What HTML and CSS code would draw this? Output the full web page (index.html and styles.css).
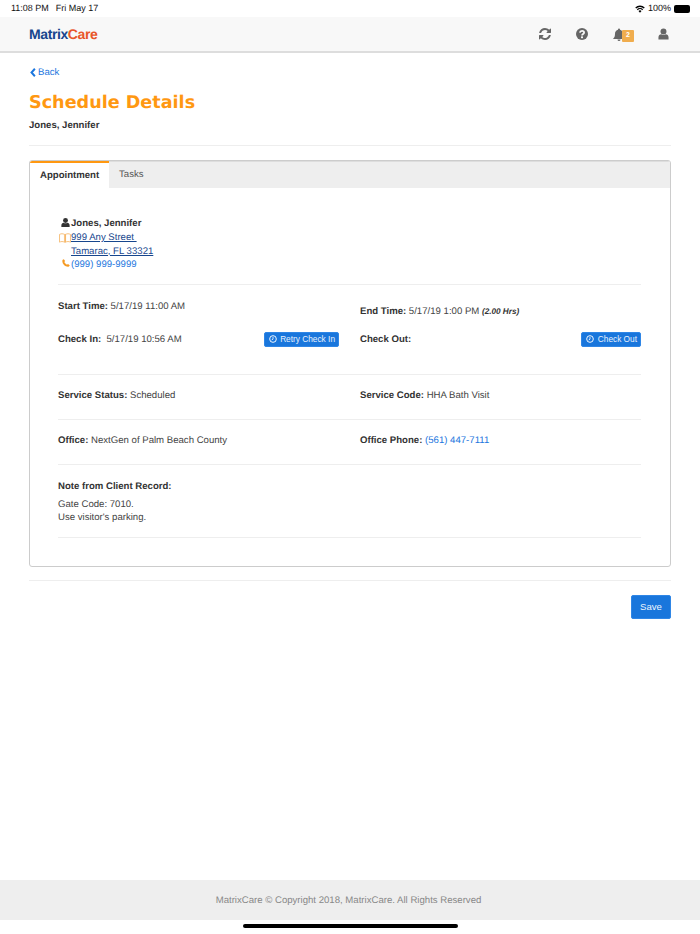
FILE: index.html
```html
<!DOCTYPE html>
<html lang="en">
<head>
<meta charset="utf-8">
<title>Schedule Details</title>
<link rel="stylesheet" href="styles.css">
</head>
<body>
<div class="page">
  <div class="status">
    <div class="status-time"><span>11:08 PM</span><span>Fri May 17</span></div>
    <div class="status-right">
      <svg class="wifi" viewBox="0 0 16 12" width="10" height="8"><path fill="#000" d="M8 12 5.6 9.3a3.4 3.4 0 0 1 4.8 0zM4.4 8 3 6.5a7 7 0 0 1 10 0L11.600 8a5 5 0 0 0-7.200 0zM1.900 5.300.4 3.700a10.800 10.800 0 0 1 15.200 0l-1.500 1.600a8.600 8.600 0 0 0-12.200 0z"/></svg>
      <span>100%</span>
      <span class="battery"></span>
    </div>
  </div>
  <header class="nav">
    <div class="logo"><span class="logo-a">Matrix</span><span class="logo-b">Care</span></div>
    <div class="nav-icons">
      <svg viewBox="0 0 1536 1536" width="12" height="12"><path fill="#666" d="M1511 928q0 5-1 7-64 268-268 434.500T764 1536q-146 0-282.500-55T238 1324l-129 129q-19 19-45 19t-45-19-19-45V960q0-26 19-45t45-19h448q26 0 45 19t19 45-19 45l-137 137q71 66 161 102t187 36q134 0 250-65t186-179q11-17 53-117 8-23 30-23h192q13 0 22.500 9.500T1511 928zm25-800v448q0 26-19 45t-45 19h-448q-26 0-45-19t-19-45 19-45l138-138Q969 256 768 256q-134 0-250 65T332 500q-11 17-53 117-8 23-30 23H50q-13 0-22.500-9.500T18 608v-7q65-268 270-434.500T768 0q146 0 284 55.500T1297 212l130-129q19-19 45-19t45 19 19 45z"/></svg>
      <svg viewBox="0 0 24 24" width="12" height="12"><circle cx="12" cy="12" r="12" fill="#666"/><path fill="none" stroke="#f8f8f8" stroke-width="3.600" d="M7.800 9.300c.3-2.300 2-3.500 4.300-3.500 2.400 0 4.100 1.400 4.100 3.400 0 3-3.900 2.900-4.100 5.800"/><rect x="10" y="16.800" width="4" height="3.600" fill="#f8f8f8"/></svg>
      <span class="bell">
        <svg viewBox="0 0 24 24" width="12" height="13"><path fill="#666" d="M12 0a2 2 0 0 1 2 2v.6c3.700.9 6 3.800 6 7.900 0 6 1.500 7.500 3.500 9.500v1H.5v-1c2-2 3.500-3.500 3.500-9.500 0-4.100 2.300-7 6-7.900V2a2 2 0 0 1 2-2zM9 22h6a3 3 0 0 1-6 0z"/></svg>
        <span class="badge">2</span>
      </span>
      <svg viewBox="0 0 24 24" width="11" height="12"><circle cx="12" cy="6.500" r="6.500" fill="#666"/><path fill="#666" d="M1 24v-5c0-4 3-6.500 6-6.500 1.500 1 3 1.500 5 1.500s3.500-.5 5-1.500c3 0 6 2.500 6 6.500v5z"/></svg>
    </div>
  </header>
  <main class="main">
    <a class="back"><svg viewBox="0 0 8 12" width="6" height="9"><path fill="none" stroke="#1b76de" stroke-width="2.600" d="M6.500 1 2 6l4.500 5"/></svg>Back</a>
    <h1>Schedule Details</h1>
    <div class="subtitle">Jones, Jennifer</div>
    <hr class="rule">
    <section class="card">
      <div class="tabs">
        <div class="tab active">Appointment</div>
        <div class="tab">Tasks</div>
      </div>
      <div class="card-body">
        <div class="contact">
          <div class="contact-line"><svg class="ci up" viewBox="0 0 24 24" width="8" height="9"><circle cx="12" cy="6.500" r="6.500" fill="#333"/><path fill="#333" d="M1 24v-5c0-4 3-6.500 6-6.500 1.500 1 3 1.500 5 1.500s3.500-.5 5-1.500c3 0 6 2.500 6 6.500v5z"/></svg><b>Jones, Jennifer</b></div>
          <div class="contact-line"><svg class="ci map" viewBox="0 0 22 18" width="12" height="10" preserveAspectRatio="none"><path fill="none" stroke="#f5b565" stroke-width="1.500" d="M1 2.500c3-1.500 6-1.500 9 0v14c-3-1.500-6-1.500-9 0zM10 2.500h2v14h-2M12 2.500c3-1.500 6-1.500 9 0v14c-3-1.500-6-1.500-9 0z"/></svg><a class="addr">999 Any Street&nbsp;</a></div>
          <div class="contact-line"><span class="ci"></span><a class="addr">Tamarac, FL 33321</a></div>
          <div class="contact-line"><svg class="ci up2" viewBox="0 0 12 12" width="8" height="8"><path fill="#f59a23" d="M2.800.5 4.600 3 3.500 4.600c.7 1.600 2.200 3.100 3.900 3.900L9 7.400l2.500 1.800c-.3 1.400-1.300 2.300-2.500 2.300C4.500 11.500.5 7.500.5 3 .5 1.800 1.400.8 2.800.500z"/></svg><a class="link">(999) 999-9999</a></div>
        </div>
        <div class="row times">
          <div class="col start"><b>Start Time:</b> 5/17/19 11:00 AM</div>
          <div class="col end"><b>End Time:</b> 5/17/19 1:00 PM <i class="hrs">(2.00 Hrs)</i></div>
        </div>
        <div class="row checks">
          <div class="col between"><span><b>Check In:</b>&nbsp; 5/17/19 10:56 AM</span><button class="mini"><svg viewBox="0 0 12 12" width="8" height="8"><circle cx="6" cy="6" r="5" fill="none" stroke="#fff" stroke-width="1.400"/><path fill="none" stroke="#fff" stroke-width="1.200" d="M6 3v3.300L4 7.500"/></svg>Retry Check In</button></div>
          <div class="col between"><b>Check Out:</b><button class="mini"><svg viewBox="0 0 12 12" width="8" height="8"><circle cx="6" cy="6" r="5" fill="none" stroke="#fff" stroke-width="1.400"/><path fill="none" stroke="#fff" stroke-width="1.200" d="M6 3v3.300L4 7.500"/></svg>Check Out</button></div>
        </div>
        <div class="row info">
          <div class="col"><b>Service Status:</b> Scheduled</div>
          <div class="col"><b>Service Code:</b> HHA Bath Visit</div>
        </div>
        <div class="row info">
          <div class="col"><b>Office:</b> NextGen of Palm Beach County</div>
          <div class="col"><b>Office Phone:</b> <a class="link">(561) 447-7111</a></div>
        </div>
        <div class="note">
          <b>Note from Client Record:</b>
          <p>Gate Code: 7010.<br>Use visitor's parking.</p>
        </div>
      </div>
    </section>
    <hr class="rule rule-low">
    <div class="actions"><button class="save">Save</button></div>
  </main>
  <footer class="footer">MatrixCare © Copyright 2018, MatrixCare. All Rights Reserved</footer>
  <div class="home-wrap"><div class="home"></div></div>
</div>
</body>
</html>
```
FILE: styles.css
```css
* { box-sizing: border-box; }
html, body { margin: 0; padding: 0; }
body { background: #fff; color: #444; font: 9.600px/13px "Liberation Sans", Arial, sans-serif; text-rendering: geometricPrecision; }
.page { width: 700px; height: 934px; display: flex; flex-direction: column; overflow: hidden; }
b { font-weight: 700; color: #333; }
.status { height: 17px; padding: 0 10px 0 11px; display: flex; justify-content: space-between; align-items: center; font-size: 9px; color: #111; }
.status-time { display: flex; gap: 7px; }
.status-right { display: flex; align-items: center; gap: 3px; }
.battery { width: 16px; height: 8px; background: #000; border-radius: 2px; display: block; }
.nav { height: 36px; background: #f8f8f8; border-bottom: 2px solid #ddd; display: flex; justify-content: space-between; align-items: center; padding: 0 31px 0 29px; }
.logo { font: 700 14px/14px "Liberation Sans", Arial, sans-serif; letter-spacing: -.4px; }
.logo-a { color: #17468d; }
.logo-b { color: #e8562a; }
.nav-icons { display: flex; align-items: center; gap: 25px; }
.bell { position: relative; display: block; width: 12px; height: 13px; margin-right: 8px; }
.badge { position: absolute; left: 9px; top: 2px; width: 12px; height: 12px; background: #f0ad4e; color: #fff; font-size: 7px; font-weight: 700; line-height: 12px; text-align: center; border-radius: 1px; }
.main { flex: 1; padding: 0 29px; display: flex; flex-direction: column; }
.back { margin-top: 12.500px; color: #1b76de; display: flex; align-items: center; gap: 2px; line-height: 13px; padding-left: 1px; }
h1 { margin: 14.500px 0 0; color: #ff9811; font: 700 17.600px/20px "DejaVu Sans", Verdana, sans-serif; }
.subtitle { margin-top: 7px; font-weight: 700; font-size: 9.600px; line-height: 12px; color: #333; }
.rule { height: 1px; border: 0; margin: 13px 0 0; background: #eee; width: 100%; }
.card { margin-top: 14px; height: 407px; border: 1px solid #ccc; border-radius: 3px; overflow: hidden; }
.tabs { display: flex; background: #eee; height: 27px; border-top: 1px solid #ddd; }
.tab { padding: 0 10px; line-height: 26px; color: #555; }
.tab.active { background: #fff; color: #333; font-weight: 700; border-top: 2px solid #ff9811; margin-top: -1px; line-height: 25px; width: 79px; height: 28px; }
.card-body { padding: 29px 29px 0 28px; }
.contact { padding-bottom: 12px; border-bottom: 1px solid #eee; }
.contact-line { display: flex; align-items: center; height: 13.700px; }
.contact-line .ci { margin-left: 2px; width: 11px; flex: none; }
.contact-line .up { margin-bottom: 2px; }
.contact-line .up2 { margin-bottom: 3px; margin-left: 3px; width: 10px; }
.contact-line .map { width: 12px; margin-left: 1px; }
.addr { color: #17468d; text-decoration: underline; }
.link { color: #1b76de; }
.row { display: flex; gap: 21px; }
.col { flex: 0 0 281px; min-width: 0; }
.times { padding-top: 15px; }
.end { padding-top: 5px; }
.hrs { font-weight: 700; font-size: 8.200px; color: #333; }
.checks { margin-top: 13px; height: 44px; border-bottom: 1px solid #eee; }
.between { display: flex; justify-content: space-between; align-items: flex-start; }
.between > span, .between > b { padding-top: 2px; }
.mini { height: 15px; margin-top: 1px; border: 1px solid #2f86e6; border-radius: 2px; background: #1976dc; color: #e8f1fc; font: 8.300px/13px "Liberation Sans", Arial, sans-serif; padding: 0 3px 0 4px; display: flex; align-items: center; gap: 3.500px; }
.info { height: 45px; padding-top: 14.500px; border-bottom: 1px solid #eee; }
.note { padding: 15px 0 13px; border-bottom: 1px solid #eee; }
.note p { margin: 5px 0 0; }
.rule-low { margin-top: 13px; }
.actions { margin-top: 14px; display: flex; justify-content: flex-end; }
.save { width: 40px; height: 24px; border: 1px solid #2f86e6; border-radius: 2px; background: #1976dc; color: #eef5fd; font: 9.600px/14px "Liberation Sans", Arial, sans-serif; padding: 0; }
.footer { height: 40px; background: #eee; color: #888; text-align: center; line-height: 42px; padding-right: 3px; }
.home-wrap { height: 14px; display: flex; justify-content: center; padding-top: 4px; }
.home { width: 215px; height: 4px; border-radius: 2px; background: #000; }
```
